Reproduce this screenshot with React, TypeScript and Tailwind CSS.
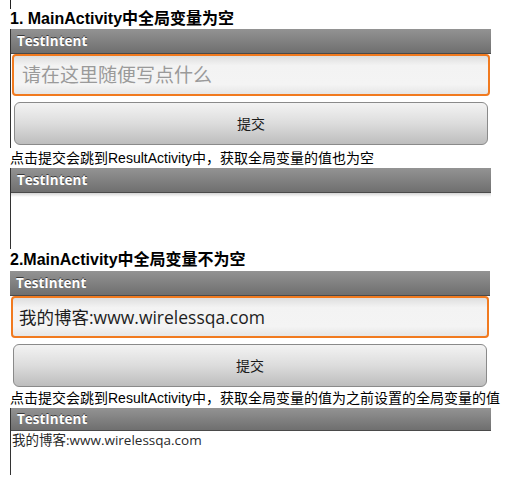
const caption = "font-['Liberation_Sans','Noto_Sans_CJK_SC',sans-serif]";
const droid = "font-['Open_Sans','Noto_Sans_CJK_SC',sans-serif]";

function TitleBar({ shadow = false, h = "h-[25px]" }: { shadow?: boolean; h?: string }) {
  return (
    <>
      <div
        className={`${h} flex items-center border-b border-[#4a4a4a] bg-[linear-gradient(to_bottom,#939393,#6f6f6f)] pl-[6px] text-[13.5px] font-bold text-white [text-shadow:0_-1px_0_#3a3a3a] ${droid}`}
      >
        TestIntent
      </div>
      {shadow && <div className="h-[4px] bg-[linear-gradient(to_bottom,#d4d4d4,#ffffff)]" />}
    </>
  );
}

function EditBox({ text, hint }: { text: string; hint?: boolean }) {
  return (
    <div
      className={`mx-[1px] flex h-[42px] items-center rounded-[4px] border-2 border-[#f17a1f] bg-[linear-gradient(to_bottom,#dedede,#f3f3f3_25%,#f4f4f4_75%,#e6e6e6)] ${
        hint ? "pl-[8px] text-[19px] text-[#9a9a9a]" : "pl-[6px] text-[17.5px] text-[#1e1e1e]"
      } ${droid}`}
    >
      {text}
    </div>
  );
}

function SubmitButton() {
  return (
    <div
      className={`mx-[3px] mt-[6px] flex h-[43px] items-center justify-center rounded-[6px] border border-[#8a8a8a] bg-[linear-gradient(to_bottom,#f3f3f3,#dcdcdc_50%,#bdbdbd)] text-[14px] text-[#1a1a1a] ${droid}`}
    >
      提交
    </div>
  );
}

export default function App() {
  return (
    <div className={`h-[487px] w-[508px] overflow-hidden bg-white pl-[10px] ${caption}`}>
      <div className="h-[9px] border-l border-[#222]" />
      <div className="h-[20px] text-[16px] leading-[20px] font-bold text-black">1. MainActivity中全局变量为空</div>

      <div className="w-[481px] border-l border-[#333] pb-[3px]">
        <TitleBar />
        <EditBox text="请在这里随便写点什么" hint />
        <SubmitButton />
      </div>

      <div className="h-[20px] text-[14px] leading-[20px] text-black">
        点击提交会跳到ResultActivity中，获取全局变量的值也为空
      </div>

      <div className="h-[81px] w-[481px] border-l border-[#333]">
        <TitleBar shadow h="h-[25px]" />
      </div>

      <div className="h-[22px] text-[16px] leading-[22px] font-bold text-black">2.MainActivity中全局变量不为空</div>

      <div className="w-[480px] pb-[1px]">
        <TitleBar />
        <EditBox text="我的博客:www.wirelessqa.com" />
        <SubmitButton />
      </div>

      <div className="h-[20px] whitespace-nowrap text-[14px] leading-[20px] text-black">
        点击提交会跳到ResultActivity中，获取全局变量的值为之前设置的全局变量的值
      </div>

      <div className="h-[67px] w-[481px] border-l border-[#333]">
        <TitleBar h="h-[23px]" />
        <div className={`pl-[1px] text-[13.5px] leading-[18px] text-[#2a2a2a] ${droid}`}>我的博客:www.wirelessqa.com</div>
      </div>
    </div>
  );
}
